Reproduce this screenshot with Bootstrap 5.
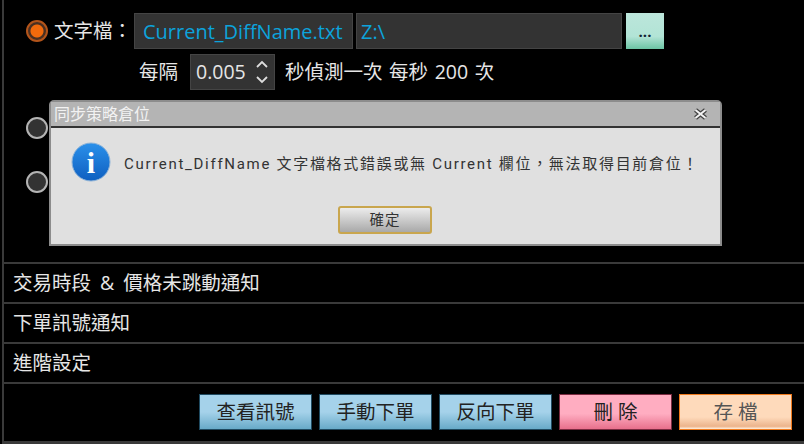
<!DOCTYPE html>
<html lang="zh-Hant">
<head>
  <meta charset="UTF-8">
  <title>同步策略倉位</title>
  <link href="https://cdn.jsdelivr.net/npm/bootstrap@5.3.0/dist/css/bootstrap.min.css" rel="stylesheet">
  <style>
    html, body { height: 100%; }
    body { background: #000; overflow: hidden; font-family: "Open Sans", "Noto Sans CJK TC", sans-serif; font-size: 19.5px; word-spacing: 1.5px; color: #e6e6e6; }
    .app-frame { position: relative; width: 804px; height: 444px; padding-left: 2px; }
    .app-inner { height: 441px; border-left: 2px solid #3a3a3a; }
    .app-foot-line { height: 3px; background: #3a3a3a; }
    .top-area { height: 262px; padding: 13px 0 0 22px; }
    .field-row { height: 36px; }
    .dark-radio { display: block; width: 22px; height: 22px; margin: 0 6px 0 0; flex: none; background-color: #333; border: 2px solid #b4b4b4; }
    .dark-radio:checked { background: radial-gradient(circle, #f26a0c 0 6px, #4a3022 7px); border-color: #b3541a; }
    .dark-radio:focus { box-shadow: none; }
    .file-label { width: 80px; white-space: nowrap; }
    .dark-input { height: 36px; background: #333; border: 1px solid #444; border-radius: 0; color: #0ca3dc; font-size: 20px; padding: 0 8px; font-family: inherit; }
    .dark-input:focus { background: #333; color: #0ca3dc; box-shadow: none; border-color: #444; }
    .name-input { width: 219px; margin-right: 3px; }
    .path-input { width: 266px; margin-right: 4px; padding: 0 4px; }
    .more-btn { width: 38px; height: 36px; padding: 0; border: 0; border-radius: 0; color: #123; font-size: 15px; font-weight: 700; background: linear-gradient(#bce6db 0, #b2e4d6 65%, #6cc4a4 100%); }
    .interval-row { margin-top: 5px; padding-left: 113px; }
    .spin-box { width: 85px; height: 36px; background: #333; border: 1px solid #444; padding: 0 5px; color: #e6e6e6; margin: 0 10px 0 12px; flex: none; }
    .spin-arrows { line-height: 0; gap: 8px; }
    .radio-two { margin-top: 27px; }
    .radio-three { margin-top: 32px; }
    .section-list { border-radius: 0; }
    .section-list .section-item { height: 40px; background: #000; color: #e6e6e6; border: 0; border-top: 2px solid #3a3a3a; border-radius: 0; padding: 0 0 0 9px; line-height: 38px; word-spacing: 4px; }
    .action-bar { height: 59px; border-top: 2px solid #3a3a3a; padding: 10px 12px 0 0; gap: 7px; }
    .action-btn { width: 113px; height: 36px; padding: 0; border-radius: 0; font-size: 19.5px; line-height: 34px; color: #222; border: 1px solid #1f4a60; background: linear-gradient(#a5d2ea 0, #a5d2ea 50%, #68aac8 100%); }
    .action-del { border-color: #7a2a40; background: linear-gradient(#ffadc1 0, #ffadc1 55%, #e8708c 100%); }
    .action-save { border-color: #f07a1c; color: #555; background: linear-gradient(#fedabb 0, #fedabb 65%, #ecb48c 92%, #fff0e0 100%); }
    .msg-dialog { position: absolute; left: 49px; top: 100px; width: 673px; height: 146px; background: #e0e0e0; border: 2px solid #8c8c8c; border-radius: 5px 5px 0 0; color: #333; word-spacing: 0; }
    .msg-title { height: 26px; padding: 0 12px 0 3px; background: #b4b4b4; border-bottom: 2px solid #333; color: #f2f2f2; font-size: 16px; line-height: 24px; }
    .msg-body { height: 78px; padding: 14px 0 0 20px; gap: 13px; }
    .msg-text { font-family: Roboto, "Noto Sans CJK TC", sans-serif; font-size: 15px; letter-spacing: 1.7px; line-height: 22px; margin-top: 11px; white-space: nowrap; }
    .info-icon { width: 40px; height: 40px; flex: none; }
    .info-letter { font-family: "Liberation Serif", serif; font-weight: 700; font-size: 30px; fill: #fff; }
    .ok-btn { width: 94px; height: 28px; padding: 0; border-radius: 3px; border: 2px solid #c9a64e; background: linear-gradient(#ececec, #a9a9a9); color: #333; font-size: 14.5px; line-height: 24px; letter-spacing: 1px; margin-left: 287px; }
  </style>
</head>
<body>
  <div class="app-frame">
    <div class="app-inner">
      <div class="top-area">
        <div class="field-row d-flex align-items-center">
          <input class="form-check-input rounded-circle dark-radio" type="radio" name="src" checked>
          <span class="file-label">文字檔：</span>
          <input class="form-control dark-input name-input" type="text" value="Current_DiffName.txt">
          <input class="form-control dark-input path-input" type="text" value="Z:\">
          <button class="btn more-btn" type="button">...</button>
        </div>
        <div class="field-row interval-row d-flex align-items-center">
          <span>每隔</span>
          <div class="spin-box d-flex align-items-center justify-content-between">
            <span>0.005</span>
            <span class="spin-arrows d-flex flex-column">
              <svg width="14" height="8" viewBox="0 0 14 8"><path d="M2 7 7 2l5 5" fill="none" stroke="#ddd" stroke-width="1.8"/></svg>
              <svg width="14" height="8" viewBox="0 0 14 8"><path d="M2 1l5 5 5-5" fill="none" stroke="#ddd" stroke-width="1.8"/></svg>
            </span>
          </div>
          <span>秒偵測一次 每秒 200 次</span>
        </div>
        <div class="radio-two"><input class="form-check-input rounded-circle dark-radio" type="radio" name="src"></div>
        <div class="radio-three"><input class="form-check-input rounded-circle dark-radio" type="radio" name="src"></div>
      </div>
      <div class="list-group section-list">
        <div class="list-group-item section-item">交易時段 &amp; 價格未跳動通知</div>
        <div class="list-group-item section-item">下單訊號通知</div>
        <div class="list-group-item section-item">進階設定</div>
      </div>
      <div class="action-bar d-flex justify-content-end">
        <button class="btn action-btn" type="button">查看訊號</button>
        <button class="btn action-btn" type="button">手動下單</button>
        <button class="btn action-btn" type="button">反向下單</button>
        <button class="btn action-btn action-del" type="button">刪 除</button>
        <button class="btn action-btn action-save" type="button">存 檔</button>
      </div>
    </div>
    <div class="app-foot-line"></div>

    <div class="msg-dialog">
      <div class="msg-title d-flex justify-content-between align-items-center">
        <span>同步策略倉位</span>
        <svg width="15" height="12" viewBox="0 0 15 12"><path d="M2.5 2 12.5 10M12.5 2 2.5 10" stroke="#444" stroke-width="4.6"/><path d="M2.5 2 12.5 10M12.5 2 2.5 10" stroke="#f4f4f4" stroke-width="2"/></svg>
      </div>
      <div class="msg-body d-flex">
        <svg class="info-icon" viewBox="0 0 40 40">
          <defs><linearGradient id="infoFill" x1="0" y1="0" x2="0" y2="1"><stop offset="0" stop-color="#2a90ea"/><stop offset="1" stop-color="#0f5fc0"/></linearGradient></defs>
          <circle cx="20" cy="20" r="19" fill="url(#infoFill)" stroke="#8fb4d8"/>
          <text class="info-letter" x="20" y="31" text-anchor="middle">i</text>
        </svg>
        <div class="msg-text">Current_DiffName 文字檔格式錯誤或無 Current 欄位，無法取得目前倉位！</div>
      </div>
      <div class="d-flex"><button class="btn ok-btn" type="button">確定</button></div>
    </div>
  </div>
</body>
</html>
